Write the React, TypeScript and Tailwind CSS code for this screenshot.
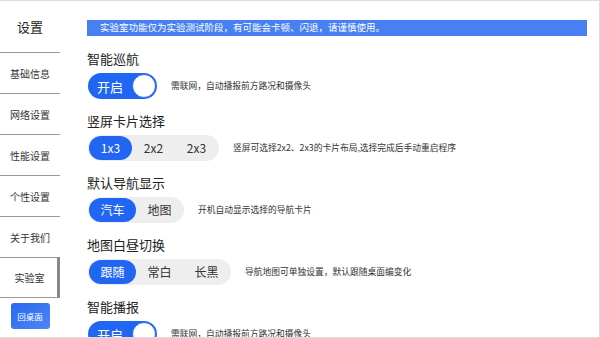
import React from "react";

const BLUE = "bg-[#2166f3]";

const navItems = ["基础信息", "网络设置", "性能设置", "个性设置", "关于我们", "实验室"];

function Toggle({ label }: { label: string }) {
  return (
    <div className={`flex h-[26px] w-[69px] shrink-0 items-center rounded-full ${BLUE} pl-[9px] pr-[1px]`}>
      <span className="flex-1 text-[13px] leading-none text-white">{label}</span>
      <span className="h-[24px] w-[24px] rounded-full border-[1.5px] border-[#2166f3] bg-white" />
    </div>
  );
}

function Segment({ options, active, width }: { options: string[]; active: number; width: number }) {
  return (
    <div className="flex h-[26px] shrink-0 items-center rounded-full bg-[#eeeeee] p-[1px]">
      {options.map((o, i) => (
        <div
          key={o}
          style={{ width }}
          className={`flex h-[24px] items-center justify-center rounded-full text-[12px] leading-none ${
            i === active ? `${BLUE} text-white` : "text-[#333]"
          }`}
        >
          {o}
        </div>
      ))}
    </div>
  );
}

function Section({ title, control, desc }: { title: string; control: React.ReactNode; desc: string }) {
  return (
    <div className="flex shrink-0 flex-col">
      <div className="h-[16px] text-[13px] leading-[16px] text-[#222]">{title}</div>
      <div className="mt-[6px] flex h-[26px] items-center gap-[14px] pl-[1px]">
        {control}
        <span className="text-[8.75px] leading-none text-[#333]">{desc}</span>
      </div>
    </div>
  );
}

export default function App() {
  return (
    <div
      className="flex h-[338px] w-[600px] overflow-hidden border-y border-r border-[#dddddd] bg-white"
      style={{ fontFamily: '"Noto Sans CJK SC", "Noto Sans", sans-serif' }}
    >
      {/* sidebar */}
      <div className="flex w-[60px] shrink-0 flex-col">
        <div className="flex h-[51px] shrink-0 items-center justify-center text-[13px] text-[#222]">设置</div>
        {navItems.map((n) => {
          const sel = n === "实验室";
          return (
            <div
              key={n}
              className={`flex h-[41px] shrink-0 items-center justify-center border-t border-[#999] text-[10px] text-[#333] ${
                sel ? "border-b border-r-[3px] border-r-[#888] pl-[2px]" : ""
              }`}
            >
              {n}
            </div>
          );
        })}
        <div className="mt-[5px] flex shrink-0 justify-center">
          <button className="flex h-[26px] w-[39px] items-center justify-center rounded-[3px] bg-gradient-to-br from-[#2a66f0] to-[#4c88f5] text-[8.5px] text-white">
            回桌面
          </button>
        </div>
      </div>

      {/* main */}
      <div className="flex flex-1 flex-col pl-[27px] pr-[10px] pt-[19px]">
        <div className="flex h-[16px] w-[500px] shrink-0 items-center bg-[#4680f2] pl-[13px] text-[9.5px] leading-none text-white">
          实验室功能仅为实验测试阶段，有可能会卡顿、闪退，请谨慎使用。
        </div>
        <div className="mt-[15px] flex shrink-0 flex-col gap-[14px]">
          <Section title="智能巡航" control={<Toggle label="开启" />} desc="需联网，自动播报前方路况和摄像头" />
          <Section
            title="竖屏卡片选择"
            control={<Segment options={["1x3", "2x2", "2x3"]} active={0} width={43} />}
            desc="竖屏可选择2x2、2x3的卡片布局,选择完成后手动重启程序"
          />
          <Section
            title="默认导航显示"
            control={<Segment options={["汽车", "地图"]} active={0} width={47} />}
            desc="开机自动显示选择的导航卡片"
          />
          <Section
            title="地图白昼切换"
            control={<Segment options={["跟随", "常白", "长黑"]} active={0} width={47} />}
            desc="导航地图可单独设置，默认跟随桌面编变化"
          />
          <Section title="智能播报" control={<Toggle label="开启" />} desc="需联网，自动播报前方路况和摄像头" />
        </div>
      </div>
    </div>
  );
}
